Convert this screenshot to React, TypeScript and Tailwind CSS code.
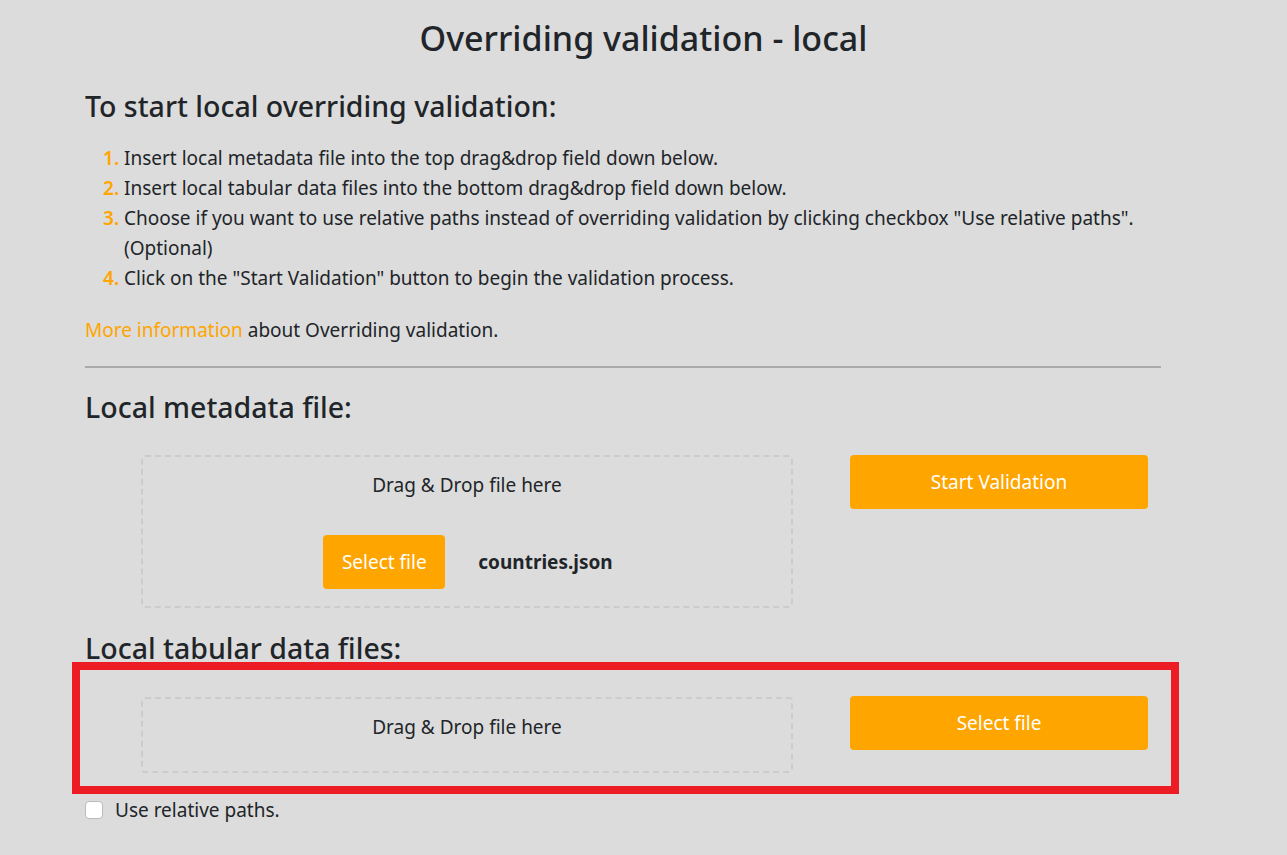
import React from "react";

const font = { fontFamily: '"Noto Sans", "Open Sans", sans-serif' };

export default function App() {
  return (
    <div className="min-h-[855px] w-full bg-[#dcdcdc] text-[#212529]" style={font}>
      <h1 className="pt-[16px] text-center text-[34px] font-medium leading-[44px]">Overriding validation - local</h1>
      <div className="ml-[85px] w-[1076px]">
        <h2 className="mt-[29px] text-[28.5px] font-medium leading-[34px]">To start local overriding validation:</h2>
        <ol className="mt-[20px] pl-[18px] text-[19px] leading-[30px]">
          {[
            "Insert local metadata file into the top drag&drop field down below.",
            "Insert local tabular data files into the bottom drag&drop field down below.",
            'Choose if you want to use relative paths instead of overriding validation by clicking checkbox "Use relative paths". (Optional)',
            'Click on the "Start Validation" button to begin the validation process.',
          ].map((t, i) => (
            <li key={i} className="flex">
              <span className="w-[21px] shrink-0 font-semibold text-[#ffa500]">{i + 1}.</span>
              <span className="w-[1040px]">{t}</span>
            </li>
          ))}
        </ol>
        <p className="mt-[22px] text-[19px] leading-[30px]">
          <span className="text-[#ffa500]">More information</span> about Overriding validation.
        </p>
        <hr className="mt-[21px] border-t-2 border-[#aaaaaa]" />
        <h2 className="mt-[22px] text-[28.5px] font-medium leading-[34px]">Local metadata file:</h2>
        <div className="mt-[31px] flex items-start">
          <div className="ml-[56px] flex h-[153px] w-[652px] flex-col items-center rounded-[4px] border-2 border-dashed border-[#cccccc]">
            <div className="mt-[15px] text-[19px] leading-[26px]">Drag &amp; Drop file here</div>
            <div className="ml-[2px] mt-[37px] flex items-center">
              <button className="h-[54px] w-[122px] rounded-[4px] bg-[#ffa500] text-[19px] text-white">Select file</button>
              <span className="ml-[33px] text-[19px] font-bold">countries.json</span>
            </div>
          </div>
          <button className="ml-[57px] h-[54px] w-[298px] rounded-[4px] bg-[#ffa500] text-[19px] text-white">Start Validation</button>
        </div>
        <h2 className="mt-[23px] text-[28.5px] font-medium leading-[34px]">Local tabular data files:</h2>
        <div className="ml-[-13px] mt-[-3px] w-[1107px] border-8 border-[#ed1c24] pb-[13px] pl-[61px] pt-[27px]">
          <div className="flex items-start">
            <div className="flex h-[76px] w-[652px] flex-col items-center rounded-[4px] border-2 border-dashed border-[#cccccc]">
              <div className="mt-[15px] text-[19px] leading-[26px]">Drag &amp; Drop file here</div>
            </div>
            <button className="ml-[57px] mt-[-1px] h-[54px] w-[298px] rounded-[4px] bg-[#ffa500] text-[19px] text-white">Select file</button>
          </div>
        </div>
        <label className="mt-[1px] flex items-center text-[19px] leading-[30px]">
          <span className="inline-block h-[18px] w-[18px] rounded-[4px] border border-[#bbbbbb] bg-white" />
          <span className="ml-[12px]">Use relative paths.</span>
        </label>
      </div>
    </div>
  );
}
